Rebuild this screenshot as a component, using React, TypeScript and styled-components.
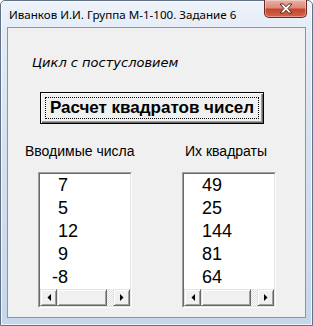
import React from 'react'
import styled, { createGlobalStyle } from 'styled-components'

const GlobalStyle = createGlobalStyle`
   html, body {
      margin: 0;
      padding: 0;
      background: #ffffff;
   }
   body {
      width: 313px;
      height: 326px;
      overflow: hidden;
   }
`

const sourceNumbers = [7, 5, 12, 9, -8]

const Window = styled.div`
   width: 313px;
   height: 326px;
   box-sizing: border-box;
   display: flex;
   flex-direction: column;
   border: 1px solid #5f7087;
   border-radius: 5px 5px 0 0;
   background: linear-gradient(180deg, #eef3fa 0%, #e2eaf5 12%, #d3dfee 55%, #c6d7eb 100%);
   box-shadow: inset 0 0 0 1px rgba(255, 255, 255, 0.75);
`

const TitleBar = styled.div`
   height: 26px;
   display: flex;
   align-items: flex-start;
   justify-content: space-between;
   padding-left: 8px;
`

const Caption = styled.span`
   margin-top: 6px;
   font: 11.6px "Noto Sans", sans-serif;
   color: #000;
   white-space: nowrap;
`

const CloseButton = styled.div`
   width: 43px;
   height: 18px;
   margin-right: 5px;
   margin-top: -1px;
   box-sizing: border-box;
   display: flex;
   align-items: center;
   justify-content: center;
   border: 1px solid #6b2a1f;
   border-top: none;
   border-radius: 0 0 5px 5px;
   background: linear-gradient(180deg, #eab1a5 0%, #dc8a78 45%, #c4462f 55%, #d5634a 100%);
   box-shadow: inset 0 0 0 1px rgba(255, 255, 255, 0.35);
`

const Client = styled.div`
   flex: 1;
   margin: 0 6px 7px 6px;
   border: 1px solid #8797ab;
   background: #f0f0f0;
   display: flex;
   flex-direction: column;
   align-items: flex-start;
`

const Heading = styled.div`
   margin: 27px 0 0 24px;
   font: oblique 13px/16px "DejaVu Sans", sans-serif;
   color: #000;
`

const ActionButton = styled.button`
   margin: 21px 0 0 32px;
   width: 224px;
   height: 32px;
   padding: 4px;
   box-sizing: border-box;
   border: 1px solid #000;
   background: #f0f0f0;
   box-shadow: inset 1px 1px 0 #ffffff, inset -1px -1px 0 #696969, inset -2px -2px 0 #a0a0a0;
   cursor: pointer;
`

const FocusRing = styled.span`
   display: flex;
   align-items: center;
   justify-content: center;
   height: 100%;
   box-sizing: border-box;
   border: 1px dotted #000;
   font: bold 17px "Liberation Sans", sans-serif;
   color: #000;
`

const Columns = styled.div`
   display: flex;
   margin-top: 19px;
`

const Column = styled.div<{ $width: number }>`
   width: ${p => p.$width}px;
   display: flex;
   flex-direction: column;
   align-items: flex-start;
`

const Label = styled.div<{ $indent: number }>`
   margin-left: ${p => p.$indent}px;
   font: 14px/16px "Liberation Sans", sans-serif;
   color: #000;
   white-space: nowrap;
`

const ListBox = styled.div<{ $indent: number }>`
   margin: 13px 0 0 ${p => p.$indent}px;
   width: 94px;
   height: 136px;
   box-sizing: border-box;
   border: 1px solid;
   border-color: #a0a0a0 #ffffff #ffffff #a0a0a0;
   background: #fff;
   display: flex;
   flex-direction: column;
`

const ListInner = styled.div`
   flex: 1;
   display: flex;
   flex-direction: column;
   border: 1px solid;
   border-color: #696969 #e3e3e3 #e3e3e3 #696969;
   overflow: hidden;
`

const Items = styled.div`
   flex: 1;
   padding-left: 18px;
`

const Item = styled.div<{ $hang?: boolean }>`
   font: 18px/23px "Liberation Sans", sans-serif;
   color: #000;
   margin-left: ${p => (p.$hang ? -6 : 0)}px;
`

const ScrollBar = styled.div`
   height: 17px;
   display: flex;
`

const ScrollPart = styled.div<{ $width: number }>`
   width: ${p => p.$width}px;
   height: 17px;
   box-sizing: border-box;
   background: #f0f0f0;
   border: 1px solid;
   border-color: #e3e3e3 #696969 #696969 #e3e3e3;
   box-shadow: inset 1px 1px 0 #ffffff, inset -1px -1px 0 #a0a0a0;
   display: flex;
   align-items: center;
   justify-content: center;
`

const Track = styled.div`
   flex: 1;
   height: 17px;
   background: repeating-conic-gradient(#ffffff 0 25%, #dcdcdc 0 50%) 0 0 / 2px 2px;
`

const Arrow: React.FC<{ dir: 'left' | 'right' }> = ({ dir }) => (
   <svg width="4" height="7" viewBox="0 0 4 7">
      {dir === 'left' ? <polygon points="4,0 4,7 0.5,3.5" fill="#000" /> : <polygon points="0,0 0,7 3.5,3.5" fill="#000" />}
   </svg>
)

const NumberList: React.FC<{ values: number[], indent: number }> = ({ values, indent }) => (
   <ListBox $indent={indent}>
      <ListInner>
         <Items>
            {values.map((v, i) => (
               <Item key={i} $hang={v < 0}>{v}</Item>
            ))}
         </Items>
         <ScrollBar>
            <ScrollPart $width={17}><Arrow dir='left' /></ScrollPart>
            <ScrollPart $width={50} />
            <Track />
            <ScrollPart $width={17}><Arrow dir='right' /></ScrollPart>
         </ScrollBar>
      </ListInner>
   </ListBox>
)

const App: React.FC = () => {
   const squares = sourceNumbers.map(n => n * n)
   return (
      <>
         <GlobalStyle />
         <Window>
            <TitleBar>
               <Caption>Иванков И.И. Группа М-1-100. Задание 6</Caption>
               <CloseButton>
                  <svg width="14" height="11" viewBox="0 0 14 11">
                     <path d="M1 1 H4.5 L7 3.8 L9.5 1 H13 L9 5.5 L13 10 H9.5 L7 7.2 L4.5 10 H1 L5 5.5 Z" fill="#fff" stroke="#5a2a22" strokeWidth="1" strokeLinejoin="round" />
                  </svg>
               </CloseButton>
            </TitleBar>
            <Client>
               <Heading>Цикл с постусловием</Heading>
               <ActionButton>
                  <FocusRing>Расчет квадратов чисел</FocusRing>
               </ActionButton>
               <Columns>
                  <Column $width={144}>
                     <Label $indent={17}>Вводимые числа</Label>
                     <NumberList values={sourceNumbers} indent={30} />
                  </Column>
                  <Column $width={150}>
                     <Label $indent={33}>Их квадраты</Label>
                     <NumberList values={squares} indent={30} />
                  </Column>
               </Columns>
            </Client>
         </Window>
      </>
   )
}

export default App
